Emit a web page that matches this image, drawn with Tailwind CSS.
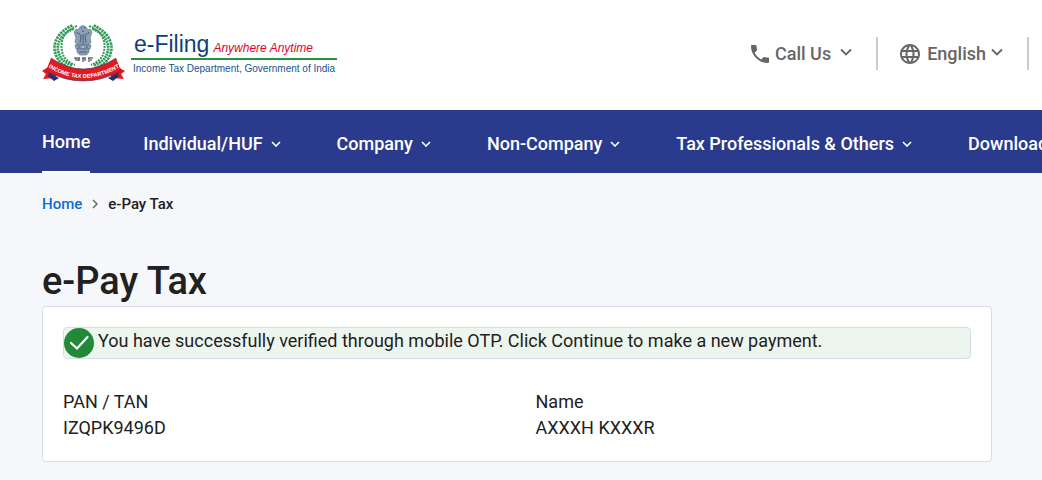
<!DOCTYPE html>
<html lang="en">
<head>
    <meta charset="UTF-8">
    <meta name="viewport" content="width=device-width, initial-scale=1.0">
    <title>e-Pay Tax</title>

    <!-- Tailwind CSS -->
    <script src="https://cdn.jsdelivr.net/npm/@tailwindcss/browser@4"></script>
</head>
<body class="bg-[#f5f7fb] min-h-screen overflow-x-hidden font-[Roboto,sans-serif] text-[#212121]">
    <header class="bg-white h-[110px] pl-[42px] pr-[13px] pt-6 flex justify-between items-start">
        <a href="#" class="flex" aria-label="e-Filing home">
            <svg class="w-[84px] h-[58px]" viewBox="0 0 84 58" aria-hidden="true">
                <!-- wreath -->
                <g fill="none" stroke="#2f9a57">
                    <path d="M31 3C17 9 12 20 15 29C17 36 22 40 30 43" stroke-width="6" stroke-dasharray="2.2 .7"/>
                    <path d="M51 3C65 9 70 20 67 29C65 36 60 40 52 43" stroke-width="6" stroke-dasharray="2.2 .7"/>
                    <path d="M35 2C21 7 18 18 20 27C21 34 26 38 33 41" stroke-width="2" stroke-dasharray="2 1"/>
                    <path d="M47 2C61 7 64 18 62 27C61 34 56 38 49 41" stroke-width="2" stroke-dasharray="2 1"/>
                </g>
                <g fill="none" stroke="#e9f4ec" stroke-width=".8">
                    <path d="M31 3C17 9 12 20 15 29C17 36 22 40 30 43"/>
                    <path d="M51 3C65 9 70 20 67 29C65 36 60 40 52 43"/>
                </g>
                <!-- lion capital -->
                <g fill="#8ba0b7" stroke="#51697f" stroke-width=".6">
                    <path d="M38 3Q41 0 44 3L46 6L48 5L50 8L49 11L48 14L49 18L47 21H35L33 18L34 14L33 11L32 8L34 5L36 6Z"/>
                    <path d="M33 21H49L48 25H34Z"/>
                    <path d="M35 25H47Q48 29 44 31H38Q34 29 35 25Z"/>
                </g>
                <g fill="none" stroke="#3f566d" stroke-width=".9">
                    <path d="M39 4H40M42 4H43M40 7Q41 8 42 7M37 9L39 12L38 19M45 9L43 12L44 19M41 10V20M35 8L36 10M47 8L46 10"/>
                    <path d="M36 23H38M44 23H46M37 28H45"/>
                </g>
                <circle cx="41" cy="23" r="1.4" fill="#e6edf3" stroke="#3f566d" stroke-width=".6"/>
                <path d="M32 34H38M40 34H44M46 34H51M34 34V37M37 34V37M35 36H37M41 34V38M43 34V37M47 34V38M48 36H50" fill="none" stroke="#333" stroke-width="1"/>
                <!-- ribbon -->
                <path d="M6 43L0 47L4 50L1 55L13 54L16 48ZM76 43L83 47L79 50L82 55L70 54L67 48Z" fill="#e11b22"/>
                <path d="M7 49L17 54L12 57L6 52ZM76 49L66 54L71 57L77 52Z" fill="#26306d"/>
                <path d="M9 34Q41 56 74 34L79 47Q41 67 4 47Z" fill="#e11b22"/>
                <path d="M9 34Q41 56 74 34M4 47Q41 67 79 47" fill="none" stroke="#34306a" stroke-width=".6"/>
                <path id="ribbon-line" d="M6 43Q41 65 78 43" fill="none"/>
                <text fill="#fff" font-family="Liberation Sans, sans-serif" font-weight="700" font-size="5.6"><textPath href="#ribbon-line" startOffset="50%" text-anchor="middle">INCOME TAX DEPARTMENT</textPath></text>
            </svg>
            <span class="ml-[5px] pt-1 font-['Liberation_Sans',sans-serif] whitespace-nowrap">
                <span class="flex items-baseline h-8 pl-[3px] border-b-2 border-[#26923b] leading-8">
                    <span class="text-[23px] text-[#0d3f7e]">e-Filing</span>
                    <span class="ml-1 text-xs leading-8 italic text-[#e4002b]">Anywhere Anytime</span>
                </span>
                <span class="block px-0.5 text-[10px] leading-[18px] text-[#17528c]">Income Tax Department, Government of India</span>
            </span>
        </a>

        <div class="flex items-center h-[33px] mt-[13px] text-lg font-medium text-[#666]">
            <button type="button" class="flex items-center h-full">
                <svg class="size-6 mr-[3px]" viewBox="0 0 24 24" fill="currentColor" aria-hidden="true"><path d="M6.62 10.79c1.44 2.83 3.76 5.14 6.59 6.59l2.2-2.2c.27-.27.67-.36 1.02-.24 1.12.37 2.33.57 3.57.57.55 0 1 .45 1 1V20c0 .55-.45 1-1 1-9.39 0-17-7.61-17-17 0-.55.45-1 1-1h3.5c.55 0 1 .45 1 1 0 1.25.2 2.45.57 3.57.11.35.03.74-.25 1.02l-2.2 2.2z"/></svg>
                Call Us
                <svg class="w-3 h-2 ml-[9px] mb-1" viewBox="0 0 12 8" fill="none" stroke="currentColor" stroke-width="1.8" aria-hidden="true"><path d="M1 1.5L6 6.5L11 1.5"/></svg>
            </button>
            <button type="button" class="flex items-center h-full ml-6 pl-5 border-l-2 border-[#ccc]">
                <svg class="size-6 mr-[5px]" viewBox="0 0 24 24" fill="currentColor" aria-hidden="true"><path d="M11.99 2C6.47 2 2 6.48 2 12s4.47 10 9.99 10C17.52 22 22 17.52 22 12S17.52 2 11.99 2zm6.93 6h-2.95c-.32-1.25-.78-2.45-1.38-3.56 1.84.63 3.37 1.91 4.33 3.56zM12 4.04c.83 1.2 1.48 2.53 1.91 3.96h-3.82c.43-1.43 1.08-2.76 1.91-3.96zM4.26 14C4.1 13.36 4 12.69 4 12s.1-1.36.26-2h3.38c-.08.66-.14 1.32-.14 2s.06 1.34.14 2H4.26zm.82 2h2.95c.32 1.25.78 2.45 1.38 3.56-1.84-.63-3.37-1.9-4.33-3.56zm2.95-8H5.08c.96-1.66 2.49-2.93 4.33-3.56C8.81 5.55 8.35 6.75 8.03 8zM12 19.96c-.83-1.2-1.48-2.53-1.91-3.96h3.82c-.43 1.43-1.08 2.76-1.91 3.96zM14.34 14H9.66c-.09-.66-.16-1.32-.16-2s.07-1.35.16-2h4.68c.09.65.16 1.32.16 2s-.07 1.34-.16 2zm.25 5.56c.6-1.11 1.06-2.31 1.38-3.56h2.95c-.96 1.65-2.49 2.93-4.33 3.56zM16.36 14c.08-.66.14-1.32.14-2s-.06-1.34-.14-2h3.38c.16.64.26 1.31.26 2s-.1 1.36-.26 2h-3.38z"/></svg>
                English
                <svg class="w-3 h-2 ml-[5px] mb-1" viewBox="0 0 12 8" fill="none" stroke="currentColor" stroke-width="1.8" aria-hidden="true"><path d="M1 1.5L6 6.5L11 1.5"/></svg>
            </button>
            <span class="h-full ml-6 border-l-2 border-[#ccc]"></span>
        </div>
    </header>

    <nav class="bg-[#2a3a8c] h-[63px] pl-[42px] overflow-hidden text-lg font-medium text-white whitespace-nowrap">
        <ul class="flex h-full gap-[53px]">
            <li><a href="#" class="flex items-center h-full pt-0.5 border-b-2 border-white">Home</a></li>
            <li>
                <button type="button" class="flex items-center h-full pt-1">Individual/HUF
                    <svg class="w-[10px] h-[6px] ml-2 mr-[3px]" viewBox="0 0 10 6" fill="none" stroke="currentColor" stroke-width="1.6" aria-hidden="true"><path d="M1 1L5 5L9 1"/></svg>
                </button>
            </li>
            <li>
                <button type="button" class="flex items-center h-full pt-1">Company
                    <svg class="w-[10px] h-[6px] ml-2 mr-[3px]" viewBox="0 0 10 6" fill="none" stroke="currentColor" stroke-width="1.6" aria-hidden="true"><path d="M1 1L5 5L9 1"/></svg>
                </button>
            </li>
            <li>
                <button type="button" class="flex items-center h-full pt-1">Non-Company
                    <svg class="w-[10px] h-[6px] ml-2 mr-[3px]" viewBox="0 0 10 6" fill="none" stroke="currentColor" stroke-width="1.6" aria-hidden="true"><path d="M1 1L5 5L9 1"/></svg>
                </button>
            </li>
            <li>
                <button type="button" class="flex items-center h-full pt-1">Tax Professionals &amp; Others
                    <svg class="w-[10px] h-[6px] ml-2 mr-[3px]" viewBox="0 0 10 6" fill="none" stroke="currentColor" stroke-width="1.6" aria-hidden="true"><path d="M1 1L5 5L9 1"/></svg>
                </button>
            </li>
            <li><a href="#" class="flex items-center h-full pt-1">Downloads</a></li>
        </ul>
    </nav>

    <main class="pl-[42px] pr-[50px]">
        <nav class="flex items-center pt-[21px] text-[15px] leading-5 font-medium" aria-label="Breadcrumb">
            <a href="#" class="text-[#0f6cd1]">Home</a>
            <svg class="w-[6px] h-[10px] mx-[10px]" viewBox="0 0 6 10" fill="none" stroke="#666" stroke-width="1.5" aria-hidden="true"><path d="M1 1L5 5L1 9"/></svg>
            <span>e-Pay Tax</span>
        </nav>

        <h1 class="mt-[43px] mb-px text-[38px] leading-12 font-medium">e-Pay Tax</h1>

        <section class="bg-white border border-[#d9dbe9] rounded p-5 text-lg leading-[26px]">
            <div class="flex items-start h-8 bg-[#edf6ee] border border-[#d9dbe9] rounded" role="status">
                <svg class="size-[30px] mr-1 shrink-0" viewBox="0 0 30 30" aria-hidden="true">
                    <circle cx="15" cy="15" r="15" fill="#23893a"/>
                    <path d="M7 15L13 20.5L23.5 9" fill="none" stroke="#fff" stroke-width="2.2" stroke-linecap="round"/>
                </svg>
                <p>You have successfully verified through mobile OTP. Click Continue to make a new payment.</p>
            </div>
            <dl class="grid grid-cols-2 gap-x-[37px] mt-[30px]">
                <div>
                    <dt>PAN / TAN</dt>
                    <dd>IZQPK9496D</dd>
                </div>
                <div>
                    <dt>Name</dt>
                    <dd>AXXXH KXXXR</dd>
                </div>
            </dl>
        </section>
    </main>
</body>
</html>
